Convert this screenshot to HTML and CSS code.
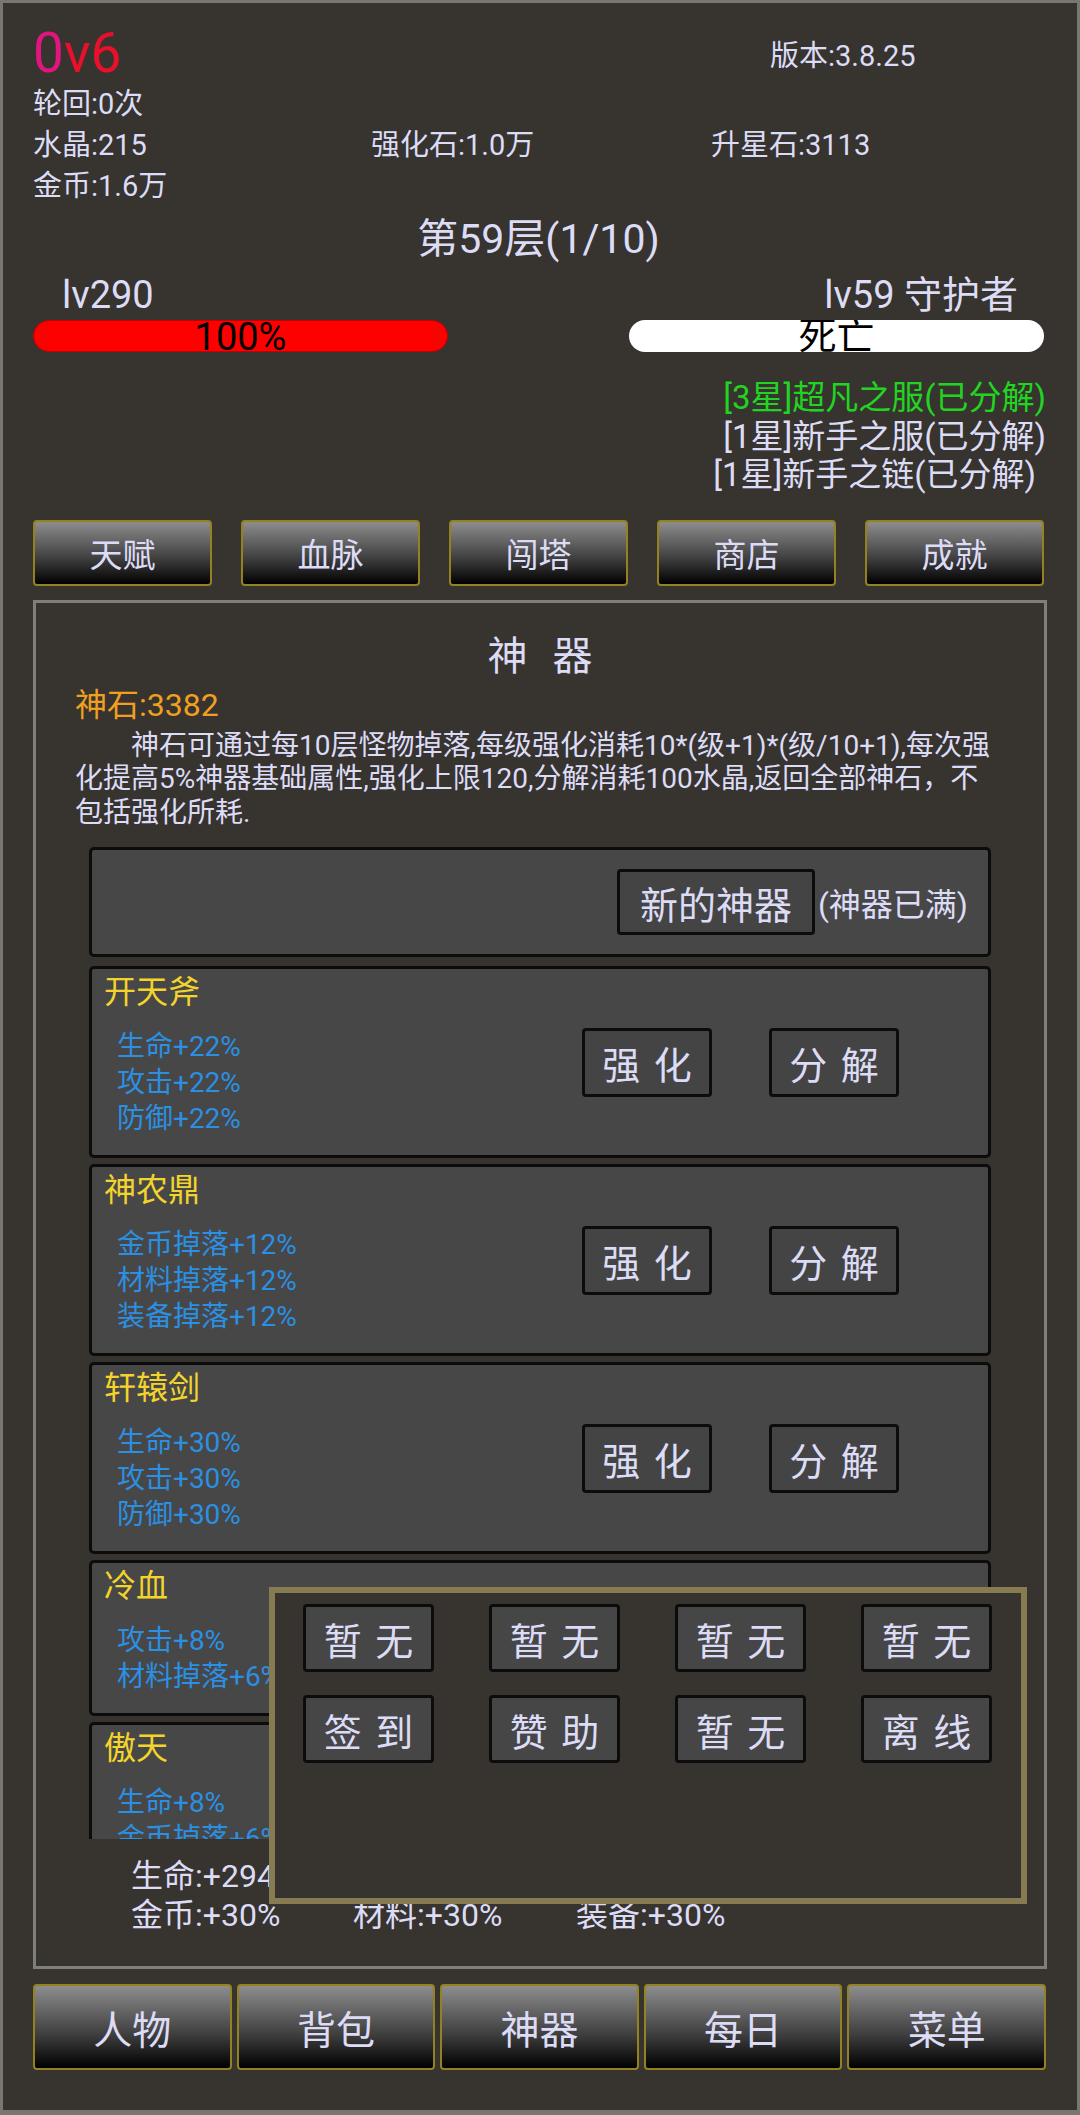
FILE: index.html
```html
<!DOCTYPE html>
<html lang="zh">
<head>
  <meta charset="UTF-8" />
  <meta name="viewport" content="width=device-width, initial-scale=1.0"/>
  <title>神器</title>
  <link rel="stylesheet" href="styles.css">
</head>
<body>
  <div class="screen">
    <div class="head">
      <span class="logo"><span class="zero">0</span>v6</span>
      <span class="ver">版本:3.8.25</span>
    </div>
    <div class="res">
      <span>轮回:0次</span><span></span><span></span>
      <span>水晶:215</span><span>强化石:1.0万</span><span>升星石:3113</span>
      <span>金币:1.6万</span>
    </div>

    <div class="floor">第59层(1/10)</div>

    <div class="fight">
      <div class="side">
        <div class="lv">lv290</div>
        <div class="bar hp">100%</div>
      </div>
      <div class="side right">
        <div class="lv">lv59 守护者</div>
        <div class="bar dead">死亡</div>
      </div>
    </div>

    <div class="drops">
      <div class="green">[3星]超凡之服(已分解)</div>
      <div>[1星]新手之服(已分解)</div>
      <div class="last">[1星]新手之链(已分解)</div>
    </div>

    <!-- top menu -->
    <div class="menu">
      <div class="gbtn">天赋</div>
      <div class="gbtn">血脉</div>
      <div class="gbtn">闯塔</div>
      <div class="gbtn">商店</div>
      <div class="gbtn">成就</div>
    </div>

    <section class="panel">
      <h2>神 器</h2>
      <div class="stone">神石:3382</div>
      <p class="desc">神石可通过每10层怪物掉落,每级强化消耗10*(级+1)*(级/10+1),每次强化提高5%神器基础属性,强化上限120,分解消耗100水晶,返回全部神石，不包括强化所耗.</p>

      <div class="list">
        <div class="box new">
          <div class="newbtn">新的神器</div>
          <span class="full">(神器已满)</span>
        </div>

        <div class="box item">
          <div class="info">
            <div class="name">开天斧</div>
            <div class="stats"><div>生命+22%</div><div>攻击+22%</div><div>防御+22%</div></div>
          </div>
          <div class="ops"><div class="sbtn">强 化</div><div class="sbtn">分 解</div></div>
        </div>

        <div class="box item">
          <div class="info">
            <div class="name">神农鼎</div>
            <div class="stats"><div>金币掉落+12%</div><div>材料掉落+12%</div><div>装备掉落+12%</div></div>
          </div>
          <div class="ops"><div class="sbtn">强 化</div><div class="sbtn">分 解</div></div>
        </div>

        <div class="box item">
          <div class="info">
            <div class="name">轩辕剑</div>
            <div class="stats"><div>生命+30%</div><div>攻击+30%</div><div>防御+30%</div></div>
          </div>
          <div class="ops"><div class="sbtn">强 化</div><div class="sbtn">分 解</div></div>
        </div>

        <div class="box item">
          <div class="info">
            <div class="name">冷血</div>
            <div class="stats"><div>攻击+8%</div><div>材料掉落+6%</div></div>
          </div>
          <div class="ops"><div class="sbtn">强 化</div><div class="sbtn">分 解</div></div>
        </div>

        <div class="box item">
          <div class="info">
            <div class="name">傲天</div>
            <div class="stats"><div>生命+8%</div><div>金币掉落+6%</div></div>
          </div>
          <div class="ops"><div class="sbtn">强 化</div><div class="sbtn">分 解</div></div>
        </div>
      </div>

      <div class="sum">
        <span>生命:+294%</span><span></span><span></span>
        <span>金币:+30%</span><span>材料:+30%</span><span>装备:+30%</span>
      </div>
    </section>

    <!-- bottom tabs -->
    <div class="tabs">
      <div class="gbtn">人物</div>
      <div class="gbtn">背包</div>
      <div class="gbtn">神器</div>
      <div class="gbtn">每日</div>
      <div class="gbtn">菜单</div>
    </div>

    <!-- daily popup -->
    <div class="popup">
      <div class="pbtn">暂 无</div>
      <div class="pbtn">暂 无</div>
      <div class="pbtn">暂 无</div>
      <div class="pbtn">暂 无</div>
      <div class="pbtn">签 到</div>
      <div class="pbtn">赞 助</div>
      <div class="pbtn">暂 无</div>
      <div class="pbtn">离 线</div>
    </div>
  </div>
</body>
</html>
```
FILE: styles.css
```css
body {
  margin: 0;
  background: #37332f;
  font-family: Roboto, "Noto Sans CJK SC", sans-serif;
  color: #dcdcf6;
}
.screen {
  position: relative;
  width: 1080px;
  height: 2115px;
  box-sizing: border-box;
  border: 3px solid #77766f;
  border-bottom-width: 5px;
  padding: 0 33px 0 30px;
}
.head {
  display: grid;
  grid-template-columns: 737px 1fr;
  align-items: center;
  margin-top: 18px;
  height: 63px;
}
.logo {
  font-size: 55px;
  color: #e8102a;
}
.zero { color: #e0157e; }
.ver { font-size: 29px; }
.res {
  display: grid;
  grid-template-columns: 338px 340px 1fr;
  font-size: 29px;
  line-height: 41px;
}
.floor {
  text-align: center;
  font-size: 41px;
  line-height: 50px;
  margin-top: 7px;
}
.fight {
  display: flex;
  justify-content: space-between;
  margin-top: 9px;
}
.side { width: 415px; }
.lv {
  font-size: 38px;
  line-height: 44px;
  padding-left: 29px;
}
.side.right .lv {
  text-align: right;
  padding: 0 26px 0 0;
}
.bar {
  height: 32px;
  margin-top: 3px;
  border-radius: 16px;
  overflow: hidden;
  text-align: center;
  color: #000;
  font-size: 38px;
  line-height: 32px;
  box-sizing: border-box;
}
.bar.hp {
  background: #ff0000;
  border: 1px solid #c40000;
}
.bar.dead { background: #fff; }
.drops {
  margin: 27px -2px 0 0;
  text-align: right;
  font-size: 33px;
  line-height: 38.5px;
}
.drops .green { color: #22d422; }
.drops .last { padding-right: 10px; }

.menu {
  display: flex;
  justify-content: space-between;
  margin-top: 25px;
}
.gbtn {
  width: 179px;
  height: 66px;
  box-sizing: border-box;
  border: 2px solid #94811f;
  border-radius: 4px;
  background: linear-gradient(#8d8d8d, #3d3d3d 60%, #000);
  font-size: 33px;
  display: flex;
  align-items: center;
  justify-content: center;
}

.panel {
  margin: 14px -3px 0 0;
  border: 3px solid #807f77;
  padding: 26px 39px 31px;
}
.panel h2 {
  margin: 0;
  font-size: 40px;
  line-height: 56px;
  font-weight: normal;
  text-align: center;
  word-spacing: 15px;
}
.stone {
  color: #f0a020;
  font-size: 32px;
  line-height: 40px;
}
.desc {
  margin: 4px 0 0;
  font-size: 28px;
  line-height: 33.5px;
  text-indent: 2em;
}
.list {
  margin: 18px 14px 0;
  height: 992px;
  overflow: hidden;
}
.box {
  background: #474747;
  border: 3px solid #0c0c0c;
  border-radius: 5px;
  margin-bottom: 6px;
}
.box.new {
  height: 110px;
  box-sizing: border-box;
  display: flex;
  justify-content: flex-end;
  align-items: center;
  padding-right: 20px;
  margin-bottom: 9px;
}
.newbtn {
  width: 198px;
  height: 66px;
  box-sizing: border-box;
  border: 3px solid #0c0c0c;
  border-radius: 4px;
  background: #444;
  font-size: 38px;
  display: flex;
  align-items: center;
  justify-content: center;
  margin-right: 3px;
}
.full { font-size: 32px; }
.item {
  display: flex;
  align-items: center;
  padding: 4px 0 18px 12px;
}
.info {
  flex: 1;
  align-self: stretch;
}
.name {
  color: #f2d42c;
  font-size: 32px;
  line-height: 38px;
}
.stats {
  margin-top: 18px;
  padding-left: 13px;
  color: #2b8fe2;
  font-size: 28px;
  line-height: 36px;
}
.ops {
  display: flex;
  gap: 57px;
  margin: 0 89px -14px 0;
}
.sbtn, .pbtn {
  width: 130px;
  height: 69px;
  box-sizing: border-box;
  border: 3px solid #0c0c0c;
  border-radius: 4px;
  background: #444;
  font-size: 38px;
  display: flex;
  align-items: center;
  justify-content: center;
  word-spacing: 4px;
}
.sum {
  margin-top: 18px;
  padding-left: 56px;
  display: grid;
  grid-template-columns: 222px 223px 1fr;
  font-size: 32px;
  line-height: 39px;
}

.tabs {
  display: grid;
  grid-template-columns: repeat(5, 1fr);
  gap: 5px;
  margin: 15px -2px 0 0;
}
.tabs .gbtn {
  width: auto;
  height: 86px;
  font-size: 39px;
}

.popup {
  position: absolute;
  left: 266px;
  top: 1584px;
  width: 758px;
  height: 317px;
  box-sizing: border-box;
  border: 6px solid #877b52;
  background: #37332f;
  padding: 11px 28px;
  display: grid;
  grid-template-columns: repeat(4, 131px);
  grid-auto-rows: 68px;
  column-gap: 55px;
  row-gap: 23px;
  align-content: start;
}
.pbtn {
  width: auto;
  height: auto;
  background: #464646;
}
```
